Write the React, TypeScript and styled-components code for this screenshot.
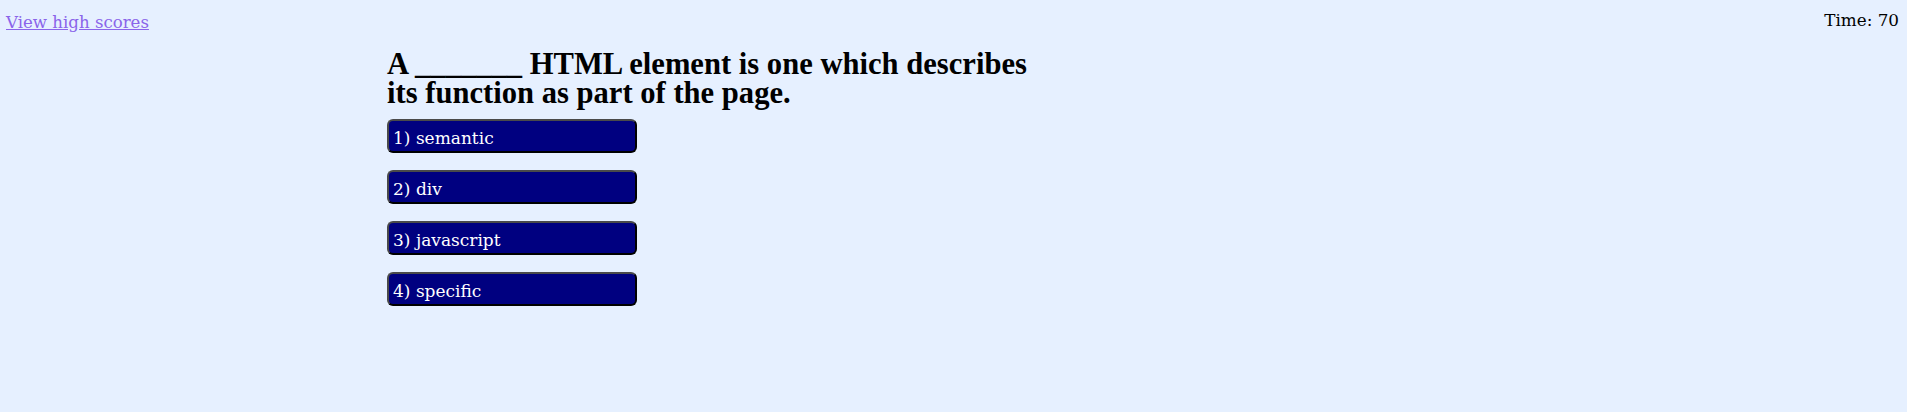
import React from "react";
import styled, { createGlobalStyle } from "styled-components";

const GlobalStyle = createGlobalStyle`
  html, body {
    margin: 0;
    padding: 0;
    background: #e6f0ff;
  }
  body {
    font-family: "DejaVu Serif", "Liberation Serif", serif;
    color: #000;
    min-height: 412px;
  }
`;

const Header = styled.header`
  display: flex;
  justify-content: space-between;
  align-items: flex-start;
  padding: 0 8px 0 6px;
`;

const ScoresLink = styled.a`
  display: block;
  padding-top: 13px;
  font-family: "DejaVu Serif", serif;
  font-size: 16.6px;
  line-height: 20px;
  color: #8a64ea;
  text-decoration: underline;
`;

const Timer = styled.div`
  padding-top: 10px;
  font-family: "DejaVu Serif", serif;
  font-size: 16.8px;
  line-height: 20px;
`;

const Main = styled.main`
  padding-left: 387px;
`;

const Question = styled.h1`
  margin: 17px 0 11px;
  max-width: 660px;
  font-family: "Liberation Serif", serif;
  font-weight: bold;
  font-size: 30.6px;
  line-height: 29px;
`;

const Choices = styled.div`
  display: flex;
  flex-direction: column;
  align-items: flex-start;
  gap: 17px;
`;

const Choice = styled.button`
  width: 250px;
  height: 34px;
  box-sizing: border-box;
  padding: 3px 4px 0;
  border: 2px solid;
  border-color: #4a4a4a #000 #000 #4a4a4a;
  border-radius: 6px;
  background: #000080;
  color: #fff;
  font-family: "DejaVu Serif", serif;
  font-size: 17px;
  text-align: left;
  cursor: pointer;
`;

const answers = ["semantic", "div", "javascript", "specific"];

export default function App() {
  return (
    <>
      <GlobalStyle />
      <Header>
        <ScoresLink href="#">View high scores</ScoresLink>
        <Timer>Time: 70</Timer>
      </Header>
      <Main>
        <Question>
          A _______ HTML element is one which describes its function as part of the page.
        </Question>
        <Choices>
          {answers.map((a, i) => (
            <Choice key={a}>
              {i + 1}) {a}
            </Choice>
          ))}
        </Choices>
      </Main>
    </>
  );
}
